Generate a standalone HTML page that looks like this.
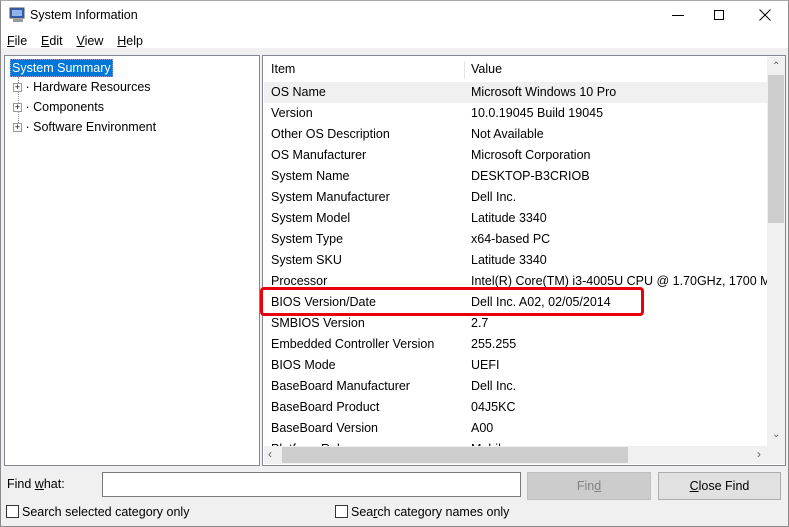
<!DOCTYPE html><html><head><style>
*{margin:0;padding:0;box-sizing:border-box}
body{width:789px;height:527px;background:#f0f0f0;font-family:"Liberation Sans",sans-serif;font-size:12.5px;color:#000;position:relative;overflow:hidden}
.a{position:absolute}
.row{position:absolute;left:8px;height:21px;line-height:21px;white-space:nowrap}
.row span{position:absolute;left:200px}
u{text-decoration:underline}
</style></head><body>
<div class="a" style="left:0;top:0;width:789px;height:48px;background:#fff"></div>
<div class="a" style="left:0;top:0;width:789px;height:527px;border:1px solid #8a8a8a;border-top-color:#aaa"></div>
<svg class="a" style="left:9px;top:7px" width="18" height="16"><rect x="1" y="1" width="14" height="10" fill="#2a5bbf" stroke="#555"/><rect x="3" y="3" width="10" height="6" fill="#8fb3ea"/><rect x="4" y="12" width="10" height="3" fill="#999"/></svg>
<div class="a" style="left:30px;top:8px;font-size:12.5px">System Information</div>
<div class="a" style="left:672px;top:15px;width:12px;height:1px;background:#000"></div>
<div class="a" style="left:714px;top:10px;width:10px;height:10px;border:1px solid #000"></div>
<svg class="a" style="left:759px;top:9px" width="12" height="12"><path d="M0.5 0.5L11.5 11.5M11.5 0.5L0.5 11.5" stroke="#000"/></svg>
<div class="a" style="left:7px;top:34px"><u>F</u>ile&nbsp;&nbsp;&nbsp;&nbsp;<u>E</u>dit&nbsp;&nbsp;&nbsp;&nbsp;<u>V</u>iew&nbsp;&nbsp;&nbsp;&nbsp;<u>H</u>elp</div>
<!-- left pane -->
<div class="a" style="left:4px;top:55px;width:256px;height:411px;background:#fff;border:1px solid #828790"></div>
<div class="a" style="left:10px;top:59px;height:18px;padding:0 1px;line-height:17px;background:#0078d7;color:#fff;border:1px dotted #99c">System Summary</div>
<div class="a" style="left:18px;top:77px;height:50px;border-left:1px dotted #999"></div>
<div class="a" style="left:13px;top:77px;line-height:20px">
<div><span style="display:inline-block;width:9px;height:9px;border:1px solid #999;font-size:9px;line-height:7px;text-align:center;vertical-align:1px;background:#fff">+</span> · Hardware Resources</div>
<div><span style="display:inline-block;width:9px;height:9px;border:1px solid #999;font-size:9px;line-height:7px;text-align:center;vertical-align:1px;background:#fff">+</span> · Components</div>
<div><span style="display:inline-block;width:9px;height:9px;border:1px solid #999;font-size:9px;line-height:7px;text-align:center;vertical-align:1px;background:#fff">+</span> · Software Environment</div>
</div>
<!-- right pane -->
<div class="a" style="left:262px;top:55px;width:524px;height:411px;background:#fff;border:1px solid #828790;overflow:hidden">
<div class="a" style="left:1px;top:1px;width:503px;height:25px;line-height:25px"><span class="a" style="left:7px">Item</span><span class="a" style="left:200px;top:4px;height:18px;border-left:1px solid #e5e5e5"></span><span class="a" style="left:207px">Value</span></div>
<div class="a" style="left:1px;top:26px;width:503px;height:21px;background:#f0f0f0"></div>
<div class="a" style="left:0;top:26px;width:504px">
<div class="row" style="top:0">OS Name<span>Microsoft Windows 10 Pro</span></div>
<div class="row" style="top:21px">Version<span>10.0.19045 Build 19045</span></div>
<div class="row" style="top:42px">Other OS Description<span>Not Available</span></div>
<div class="row" style="top:63px">OS Manufacturer<span>Microsoft Corporation</span></div>
<div class="row" style="top:84px">System Name<span>DESKTOP-B3CRIOB</span></div>
<div class="row" style="top:105px">System Manufacturer<span>Dell Inc.</span></div>
<div class="row" style="top:126px">System Model<span>Latitude 3340</span></div>
<div class="row" style="top:147px">System Type<span>x64-based PC</span></div>
<div class="row" style="top:168px">System SKU<span>Latitude 3340</span></div>
<div class="row" style="top:189px">Processor<span>Intel(R) Core(TM) i3-4005U CPU @ 1.70GHz, 1700 MHz</span></div>
<div class="row" style="top:210px">BIOS Version/Date<span>Dell Inc. A02, 02/05/2014</span></div>
<div class="row" style="top:231px">SMBIOS Version<span>2.7</span></div>
<div class="row" style="top:252px">Embedded Controller Version<span>255.255</span></div>
<div class="row" style="top:273px">BIOS Mode<span>UEFI</span></div>
<div class="row" style="top:294px">BaseBoard Manufacturer<span>Dell Inc.</span></div>
<div class="row" style="top:315px">BaseBoard Product<span>04J5KC</span></div>
<div class="row" style="top:336px">BaseBoard Version<span>A00</span></div>
<div class="row" style="top:357px">Platform Role<span>Mobile</span></div>
</div>
<div class="a" style="left:504px;top:1px;width:18px;height:390px;background:#f0f0f0"></div>
<div class="a" style="left:505px;top:19px;width:16px;height:148px;background:#cdcdcd"></div>
<div class="a" style="left:509px;top:5px;font-size:10px;color:#606060">&#8963;</div>
<div class="a" style="left:509px;top:373px;font-size:10px;color:#606060">&#8964;</div>
<div class="a" style="left:1px;top:390px;width:521px;height:18px;background:#f0f0f0"></div>
<div class="a" style="left:19px;top:391px;width:346px;height:16px;background:#cdcdcd"></div>
<div class="a" style="left:5px;top:391px;font-size:12px;color:#606060">&#8249;</div>
<div class="a" style="left:494px;top:391px;font-size:12px;color:#606060">&#8250;</div>
</div>
<div class="a" style="left:260px;top:287px;width:384px;height:29px;border:3px solid #e8000d;border-radius:4px"></div>
<!-- find -->
<div class="a" style="left:7px;top:477px">Find <u>w</u>hat:</div>
<div class="a" style="left:102px;top:472px;width:419px;height:25px;background:#fff;border:1px solid #7a7a7a"></div>
<div class="a" style="left:527px;top:472px;width:124px;height:28px;background:#cccccc;border:1px solid #bfbfbf;color:#838383;text-align:center;line-height:26px">Fin<u>d</u></div>
<div class="a" style="left:658px;top:472px;width:123px;height:28px;background:#e1e1e1;border:1px solid #adadad;text-align:center;line-height:26px"><u>C</u>lose Find</div>
<div class="a" style="left:6px;top:505px;width:13px;height:13px;border:1px solid #333;background:#fff"></div>
<div class="a" style="left:22px;top:505px">Search selected category only</div>
<div class="a" style="left:335px;top:505px;width:13px;height:13px;border:1px solid #333;background:#fff"></div>
<div class="a" style="left:351px;top:505px">Sea<u>r</u>ch category names only</div>
</body></html>
